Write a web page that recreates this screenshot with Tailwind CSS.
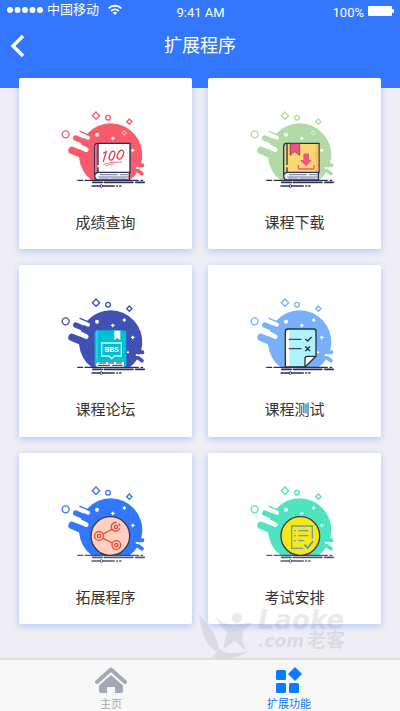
<!DOCTYPE html>
<html lang="zh-CN">
  <head>
    <meta charset="UTF-8" />
    <meta name="viewport" content="width=device-width, initial-scale=1.0" />
    <title>扩展程序</title>
    <script src="https://cdn.jsdelivr.net/npm/@tailwindcss/browser@4"></script>
  </head>
  <body class="relative flex min-h-screen flex-col bg-[#eeeef4] font-['Roboto','Noto_Sans_CJK_SC',sans-serif] text-[#333333]">
    <!-- Shared shapes -->
    <svg class="hidden">
      <symbol id="splash" viewBox="0 0 330 285">
        <path d="M125 241A95 95 0 1 1 239 241Z" fill="currentColor" />
        <g fill="none" stroke-linecap="round">
          <path d="M84 137L108 149" stroke="#fff" stroke-width="15" />
          <path d="M88 101L114 113" stroke="#fff" stroke-width="12" />
          <path d="M66 151L114 171" stroke="currentColor" stroke-width="22" />
          <path d="M77 114L116 131" stroke="currentColor" stroke-width="16" />
          <path d="M90 94L120 107" stroke="currentColor" stroke-width="4" />
          <path d="M262 195L277 196" stroke="currentColor" stroke-width="12" />
          <path d="M260 204L271 206" stroke="#fff" stroke-width="6" />
          <path d="M265 213L276 221" stroke="currentColor" stroke-width="11" />
        </g>
        <g fill="none" stroke="currentColor" stroke-width="4">
          <path d="M138 36L149 47L138 58L127 47Z" />
          <path d="M238 57L246 65L238 73L230 65Z" />
          <circle cx="174" cy="53" r="7" />
          <circle cx="47" cy="103" r="10.5" />
        </g>
        <circle cx="141" cy="104" r="6" fill="#fff" />
        <path d="M183 115H194M188 110V121M243 151H254M248 146V157" stroke="#fff" stroke-width="4" />
      </symbol>
      <symbol id="ground" viewBox="0 0 330 285">
        <g fill="none" stroke="#2b3057" stroke-linecap="round">
          <path d="M83 241H98M105 241H265M273 241H278" stroke-width="4" />
          <path d="M128 247H157M163 247H249M257 247H283" stroke-width="5" />
          <path d="M126 258H193M200 258H203M209 258H213" stroke-width="4" />
          <circle cx="154" cy="258" r="4" fill="#fff" stroke-width="3" />
        </g>
      </symbol>
      <symbol id="pages" viewBox="0 0 330 285">
        <path d="M240 217H144Q134 219 134 229Q135 239 145 240H238V217" fill="#f3f4fb" stroke="#2b3057" stroke-width="4" />
        <path d="M150 224H203M210 224H235M145 231H237M148 237H176M182 237H230" stroke="#777b9c" stroke-width="3" />
      </symbol>
    </svg>

    <header class="h-[88px] bg-[#3477ff] text-white">
      <div class="grid h-6 grid-cols-3 items-center pr-[6px] pl-[7px] text-[13px] leading-5">
        <div class="flex items-center pb-1">
          <svg class="h-2 w-9" viewBox="0 0 36 8" fill="#fff">
            <circle cx="3" cy="4" r="3" /><circle cx="10.5" cy="4" r="3" /><circle cx="18" cy="4" r="3" /><circle cx="25.5" cy="4" r="3" /><circle cx="33" cy="4" r="3" />
          </svg>
          <span class="ml-1 whitespace-nowrap">中国移动</span>
          <svg class="ml-2 h-3 w-4 shrink-0" viewBox="0 0 16 12" fill="none" stroke="#fff" stroke-width="1.8">
            <path d="M1.6 4.4A9 9 0 0 1 14.4 4.4M4.2 7A5.4 5.4 0 0 1 11.8 7" />
            <path d="M5.8 8.8A3.2 3.2 0 0 1 10.2 8.8L8 11Z" fill="#fff" stroke="none" />
          </svg>
        </div>
        <span class="pt-[2px] text-center">9:41 AM</span>
        <div class="flex items-center justify-end gap-1">
          <span class="pt-[2px]">100%</span>
          <svg class="-mt-[3px] h-[10px] w-[26px]" viewBox="0 0 26 10" fill="#fff">
            <rect width="24" height="10" rx="1" /><rect x="24" y="3" width="2" height="4" rx="1" />
          </svg>
        </div>
      </div>
      <div class="grid h-11 grid-cols-[40px_1fr_40px] items-center">
        <button type="button" aria-label="返回" class="pl-[10px]">
          <svg class="h-6 w-4" viewBox="0 0 16 24" fill="none" stroke="#fff" stroke-width="3.4">
            <path d="M13 2L3 12L13 22" />
          </svg>
        </button>
        <h1 class="text-center text-[18px] leading-6">扩展程序</h1>
      </div>
    </header>

    <main class="-mt-[10px] grid flex-1 grid-cols-2 grid-rows-3 gap-4 px-[19px] pb-[34px]">
      <a href="#" class="flex flex-col items-center rounded-xs bg-white pt-[22px] shadow-[0_2px_7px_#3477ff55]">
        <svg class="mr-[2px] h-[95px] w-[110px]" viewBox="0 0 330 285">
          <use href="#splash" class="text-[#f95b6b]" />
          <path d="M240 130H142Q134 130 134 140V230Q137 218 146 218H240Z" fill="#fff" stroke="#2b3057" stroke-width="4" />
          <path d="M136 138Q136 132 143 132V217L136 222Z" fill="#f95b6b" />
          <path d="M144 130V195M144 202V218" stroke="#2b3057" stroke-width="4" />
          <use href="#pages" />
          <g fill="none" stroke="#ed3948" stroke-width="4" stroke-linecap="round">
            <path d="M161 159L169 155L160 184" />
            <ellipse cx="186" cy="167" rx="7" ry="14" transform="rotate(22 186 167)" />
            <ellipse cx="211" cy="164" rx="8" ry="14" transform="rotate(25 211 164)" />
            <path d="M161 193Q184 184 215 186M167 198Q179 192 193 191" stroke-width="2" />
          </g>
          <path d="M223 92L229 99L223 106L217 99Z" fill="none" stroke="#fff" stroke-width="2" />
          <use href="#ground" />
        </svg>
        <span class="mt-4 text-[15px] leading-6">成绩查询</span>
      </a>

      <a href="#" class="flex flex-col items-center rounded-xs bg-white pt-[22px] shadow-[0_2px_7px_#3477ff55]">
        <svg class="mr-[2px] h-[95px] w-[110px]" viewBox="0 0 330 285">
          <use href="#splash" class="text-[#b1daa6]" />
          <path d="M240 130H142Q134 130 134 140V230Q137 218 146 218H240Z" fill="#f9d970" stroke="#2b3057" stroke-width="4" />
          <path d="M238 133V216H228Q235 190 225 160Q238 150 228 133Z" fill="#f5c55c" />
          <path d="M144 130V195M144 202V218" stroke="#2b3057" stroke-width="4" />
          <path d="M153 131H182V166L167 155L153 166Z" fill="#ee5586" stroke="#6b3059" stroke-width="2" />
          <path d="M193 162Q201 158 210 162V180H219L201 199L183 180H193Z" fill="#ee5586" />
          <path d="M178 195V203Q178 207 182 207H221Q225 207 225 203V195" fill="none" stroke="#ee5586" stroke-width="4" />
          <use href="#pages" />
          <path d="M223 92L229 99L223 106L217 99Z" fill="none" stroke="#fff" stroke-width="2" />
          <use href="#ground" />
        </svg>
        <span class="mt-4 text-[15px] leading-6">课程下载</span>
      </a>

      <a href="#" class="flex flex-col items-center rounded-xs bg-white pt-[22px] shadow-[0_2px_7px_#3477ff55]">
        <svg class="mr-[2px] h-[95px] w-[110px]" viewBox="0 0 330 285">
          <use href="#splash" class="text-[#4150b5]" />
          <path d="M142 130H220Q229 130 229 139V241H142Q134 240 134 230V139Q134 130 142 130Z" fill="#00bfd5" />
          <path d="M141 131V222" stroke="#5ad8e8" stroke-width="3" />
          <path d="M193 131H211V160L202 152L193 160Z" fill="#fff" />
          <path d="M155 168H214V207H193L185 215L177 207H155Z" fill="none" stroke="#d7fafd" stroke-width="4" />
          <text x="185" y="196" text-anchor="middle" fill="#fff" font-family="Liberation Mono, monospace" font-weight="700" font-size="24">BBS</text>
          <path d="M222 225H146Q138 227 138 233Q138 240 146 241H222Z" fill="#fff" />
          <path d="M146 228H168M173 228H192M198 228H216M144 235H180M187 235H218" stroke="#2b3057" stroke-width="3" />
          <path d="M218 99H228M223 94V104M231 196H237M234 193V199" stroke="#fff" stroke-width="4" />
          <use href="#ground" />
        </svg>
        <span class="mt-4 text-[15px] leading-6">课程论坛</span>
      </a>

      <a href="#" class="flex flex-col items-center rounded-xs bg-white pt-[22px] shadow-[0_2px_7px_#3477ff55]">
        <svg class="mr-[2px] h-[95px] w-[110px]" viewBox="0 0 330 285">
          <use href="#splash" class="text-[#78b0fc]" />
          <path d="M146 126H224Q231 126 231 134V208L200 240H139V134Q139 126 146 126Z" fill="#b1f3fd" />
          <path d="M141 134Q141 128 147 128H151V239H141Z" fill="#fff" />
          <path d="M198 240V215Q198 208 205 208H230Z" fill="#fff" />
          <path d="M147 126H224Q231 126 231 134V208L198 240H139V134Q139 126 147 126ZM198 240V215Q198 208 205 208H231" fill="none" stroke="#2b3048" stroke-width="4" stroke-linejoin="round" />
          <path d="M151 157H186M151 185H186" stroke="#3a4966" stroke-width="4" stroke-linecap="round" />
          <path d="M200 157L206 162L217 151M200 179L212 191M212 179L200 191" fill="none" stroke="#2b3048" stroke-width="4" stroke-linecap="round" />
          <path d="M219 99H229M224 94V104M234 196H240M237 193V199" stroke="#fff" stroke-width="4" />
          <use href="#ground" />
        </svg>
        <span class="mt-4 text-[15px] leading-6">课程测试</span>
      </a>

      <a href="#" class="flex flex-col items-center rounded-xs bg-white pt-[22px] shadow-[0_2px_7px_#3477ff55]">
        <svg class="mr-[2px] h-[95px] w-[110px]" viewBox="0 0 330 285">
          <use href="#splash" class="text-[#3477ff]" />
          <use href="#ground" class="opacity-80" />
          <circle cx="181" cy="183" r="58" fill="#ffcfc1" stroke="#3b3b46" stroke-width="4" />
          <g fill="none" stroke="#ea4a2e" stroke-width="4">
            <circle cx="147" cy="183" r="13" /><circle cx="147" cy="183" r="5" />
            <path d="M209 160A13 13 0 1 1 200 143M206 146L210 153" /><circle cx="198" cy="156" r="5" />
            <circle cx="199" cy="210" r="13" /><circle cx="199" cy="210" r="5" />
            <path d="M159 177L186 163M159 190L187 204" />
          </g>
          <path d="M218 99H228M223 94V104" stroke="#fff" stroke-width="4" />
        </svg>
        <span class="mt-4 text-[15px] leading-6">拓展程序</span>
      </a>

      <a href="#" class="flex flex-col items-center rounded-xs bg-white pt-[22px] shadow-[0_2px_7px_#3477ff55]">
        <svg class="mr-[2px] h-[95px] w-[110px]" viewBox="0 0 330 285">
          <use href="#splash" class="text-[#4ee3c1]" />
          <use href="#ground" class="opacity-80" />
          <circle cx="184" cy="183" r="58" fill="#f8e71c" stroke="#3b3b46" stroke-width="4" />
          <g fill="none" stroke="#6aa1a0" stroke-width="4">
            <path d="M220 191V153H158V220H192" />
            <path d="M166 167H171M178 167H208M166 182H171M178 182H208M166 197H171M178 197H194" />
            <path d="M196 209L206 219L222 198" stroke="#5b96ae" stroke-width="5" />
          </g>
          <path d="M219 99H229M224 94V104" stroke="#fff" stroke-width="4" />
        </svg>
        <span class="mt-4 text-[15px] leading-6">考试安排</span>
      </a>
    </main>

    <nav class="grid h-[53px] grid-cols-[222px_1fr] border-t-2 border-[#dedee3] bg-[#f8f8f8] text-[11px] leading-4">
      <a href="#" class="flex flex-col items-center pt-[6px] text-[#a2a9b4]">
        <svg class="h-7 w-8" viewBox="0 0 32 28" fill="currentColor">
          <path d="M2 16L16 3.500L30 16" fill="none" stroke="currentColor" stroke-width="4" stroke-linecap="round" stroke-linejoin="round" />
          <path d="M4 18L16 8L28 18V25Q28 27 26 27H20V21H12V27H6Q4 27 4 25Z" />
          <path d="M3 19.500L16 8L29 19.500" fill="none" stroke="#f8f8f8" stroke-width="1.500" />
        </svg>
        <span class="mt-[3px]">主页</span>
      </a>
      <a href="#" aria-current="page" class="flex flex-col items-center pr-[44px] pt-[6px] text-[#0a7aff]">
        <svg class="h-7 w-7" viewBox="0 0 28 28" fill="currentColor">
          <rect x="1" y="4" width="10" height="10" rx="1.500" />
          <rect x="1" y="17" width="10" height="10" rx="1.500" />
          <rect x="14" y="17" width="10" height="10" rx="1.500" />
          <path d="M20 1.500L26.500 8L20 14.500L13.500 8Z" stroke="currentColor" stroke-linejoin="round" />
        </svg>
        <span class="mt-[3px]">扩展功能</span>
      </a>
    </nav>

    <!-- Watermark -->
    <svg class="pointer-events-none absolute right-[48px] bottom-[48px] h-[64px] w-[156px] opacity-15" viewBox="0 -10 156 64" fill="#77777e" aria-hidden="true">
      <path d="M3 5C6 24 9 36 21 43L16 48C30 52 43 49 54 41C44 45 34 45 28 43C17 37 14 20 3 5Z" />
      <path d="M3 5C12 18 22 24 23 43C10 38 5 22 3 5Z" />
      <circle cx="41" cy="9" r="5" />
      <path d="M20 8Q26 15 37 16L57 13Q51 20 47 22L46 31L50 42L39 32L27 40L31 23Q24 18 20 8Z" />
      <g font-family="DejaVu Sans, sans-serif" font-weight="700" font-style="italic">
        <text x="62" y="20" font-size="26">Laoke</text>
        <text x="62" y="38" font-size="17">.com</text>
        <text x="111" y="38" font-size="19" font-family="Noto Sans CJK SC, sans-serif" font-style="normal">老客</text>
      </g>
    </svg>
  </body>
</html>
